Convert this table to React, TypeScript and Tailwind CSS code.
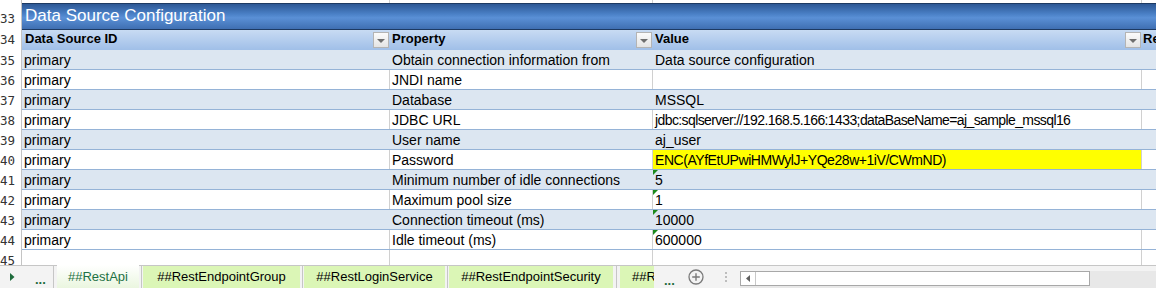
import React from "react";

type Row = { n: number; prop: string; value: string; yellow?: boolean; flag?: boolean; tight?: string };

const rows: Row[] = [
  { n: 35, prop: "Obtain connection information from", value: "Data source configuration" },
  { n: 36, prop: "JNDI name", value: "" },
  { n: 37, prop: "Database", value: "MSSQL" },
  {
    n: 38,
    prop: "JDBC URL",
    value: "jdbc:sqlserver://192.168.5.166:1433;dataBaseName=aj_sample_mssql16",
    tight: "tracking-[-0.6px]",
  },
  { n: 39, prop: "User name", value: "aj_user" },
  { n: 40, prop: "Password", value: "ENC(AYfEtUPwiHMWylJ+YQe28w+1iV/CWmND)", yellow: true, tight: "tracking-[-0.45px]" },
  { n: 41, prop: "Minimum number of idle connections", value: "5", flag: true },
  { n: 42, prop: "Maximum pool size", value: "1", flag: true },
  { n: 43, prop: "Connection timeout (ms)", value: "10000", flag: true },
  { n: 44, prop: "Idle timeout (ms)", value: "600000", flag: true },
];

const FilterButton = () => (
  <div className="absolute right-0 top-[2px] w-[16px] h-[16px] border border-[#b4b4b4] bg-[linear-gradient(#fbfbfb,#e4e4e4)] flex items-center justify-center">
    <div className="mt-[1px] w-0 h-0 border-l-[4px] border-r-[4px] border-t-[4px] border-l-transparent border-r-transparent border-t-[#6e6e6e]" />
  </div>
);

const RowNum = ({ n, h, pb }: { n: number; h: string; pb: string }) => (
  <div
    className={`w-[22px] shrink-0 ${h} ${pb} border-r border-[#c4c4c4] bg-white flex items-end justify-end pr-[6px] text-[12.5px] leading-[14px] text-[#333] font-['DejaVu_Sans_Mono',monospace]`}
  >
    {n}
  </div>
);

const Tab = ({ label, w }: { label: string; w: string }) => (
  <div className={`${w} shrink-0 bg-[#dbf6b6] flex items-center justify-center text-[13px] text-black`}>{label}</div>
);

const TabGap = ({ w }: { w: string }) => (
  <div className={`${w} shrink-0 flex justify-center`}>
    <div className="w-px h-full bg-[#c6c6c6]" />
  </div>
);

export default function App() {
  return (
    <div className="w-[1156px] h-[288px] overflow-hidden bg-white font-['Liberation_Sans',Arial,sans-serif] flex flex-col">
      {/* sheet */}
      <div className="h-[265px] overflow-hidden flex flex-col">
        {/* row 32, mostly hidden */}
        <div className="flex h-[3px] shrink-0">
          <div className="w-[22px] border-r border-[#c4c4c4]" />
          <div className="w-[368px] border-r border-[#d0d0d0]" />
          <div className="w-[263px] border-r border-[#d0d0d0]" />
          <div className="w-[489px] border-r border-[#d0d0d0]" />
          <div className="flex-1" />
        </div>

        {/* title row 33 */}
        <div className="flex h-[27px] shrink-0">
          <RowNum n={33} h="h-[27px]" pb="pb-[4px]" />
          <div className="flex-1 border-t border-b border-[#1d3a63] bg-[linear-gradient(to_bottom,#2d5895_0%,#4a80c6_40%,#5a90d6_55%,#3f6fb2_100%)] pl-[3px] text-[17px] leading-[24px] text-white">
            Data Source Configuration
          </div>
        </div>

        {/* header row 34 */}
        <div className="flex h-[20px] shrink-0">
          <RowNum n={34} h="h-[20px]" pb="pb-[3px]" />
          <div className="flex flex-1 bg-[linear-gradient(to_bottom,#c8dbf3,#a0bfe8)] text-[13px] leading-[18px] font-bold text-black">
            <div className="relative w-[368px] border-r border-transparent pl-[3px]">
              Data Source ID
              <FilterButton />
            </div>
            <div className="relative w-[263px] border-r border-transparent pl-[2px]">
              Property
              <FilterButton />
            </div>
            <div className="relative w-[489px] border-r border-transparent pl-[2px]">
              Value
              <FilterButton />
            </div>
            <div className="flex-1 pl-[1px] overflow-hidden whitespace-nowrap">Re</div>
          </div>
        </div>

        {/* data rows */}
        {rows.map((r) => {
          const band = r.n % 2 === 1;
          const grid = band ? "border-transparent" : "border-[#d0d0d0]";
          return (
            <div key={r.n} className="flex h-[20px] shrink-0">
              <RowNum n={r.n} h="h-[20px]" pb="pb-[2px]" />
              <div
                className={`flex flex-1 border-b border-[#95b3d7] text-[14px] leading-[20px] text-black whitespace-nowrap ${
                  band ? "bg-[#dce6f1]" : "bg-white"
                }`}
              >
                <div className={`w-[368px] border-r ${grid} pl-[2px]`}>primary</div>
                <div className={`w-[263px] border-r ${grid} pl-[2px]`}>{r.prop}</div>
                <div
                  className={`relative w-[489px] border-r ${grid} pl-[2px] overflow-hidden ${r.tight ?? ""} ${
                    r.yellow ? "bg-[#ffff00]" : ""
                  }`}
                >
                  {r.flag && (
                    <div className="absolute left-0 top-0 w-0 h-0 border-t-[5px] border-r-[5px] border-t-[#1c8a1c] border-r-transparent" />
                  )}
                  {r.value}
                </div>
                <div className="flex-1" />
              </div>
            </div>
          );
        })}

        {/* row 45 */}
        <div className="flex h-[20px] shrink-0">
          <RowNum n={45} h="h-[20px]" pb="pb-[2px]" />
          <div className="w-[368px] border-r border-[#d0d0d0]" />
          <div className="w-[263px] border-r border-[#d0d0d0]" />
          <div className="w-[489px] border-r border-[#d0d0d0]" />
          <div className="flex-1" />
        </div>
      </div>

      {/* sheet tabs */}
      <div className="flex h-[23px] shrink-0 border-t border-[#c6c6c6] bg-[#f3f3f3]">
        <div className="w-[54px] shrink-0 border-r border-[#c6c6c6] flex items-center pl-[10px]">
          <svg width="5" height="8" viewBox="0 0 5 8">
            <path d="M0 0 L4.5 4 L0 8 Z" fill="#1e6b3c" />
          </svg>
          <span className="ml-[20px] text-[13px] font-bold leading-none text-[#1e6b3c] mt-[4px]">...</span>
        </div>
        <div className="w-[3px] shrink-0" />
        <div className="w-[82px] shrink-0 -mt-px h-[23px] bg-[linear-gradient(to_bottom,#ffffff,#eaf6df)] flex items-center justify-center text-[13px] text-[#1e7145]">
          ##RestApi
        </div>
        <TabGap w="w-[4px]" />
        <Tab label="##RestEndpointGroup" w="w-[157px]" />
        <TabGap w="w-[4px]" />
        <Tab label="##RestLoginService" w="w-[141px]" />
        <TabGap w="w-[4px]" />
        <Tab label="##RestEndpointSecurity" w="w-[164px]" />
        <TabGap w="w-[7px]" />
        <div className="w-[34px] shrink-0 bg-[#dbf6b6] overflow-hidden flex items-center pl-[12px] text-[13px] whitespace-nowrap">
          ##R
        </div>
        <div className="ml-[10px] w-[10px] shrink-0 flex items-center">
          <span className="text-[13px] font-bold leading-none text-[#1e6b3c] mt-[6px]">...</span>
        </div>
        <div className="ml-[14px] shrink-0 flex items-center">
          <svg width="16" height="16" viewBox="0 0 16 16">
            <circle cx="8" cy="8" r="7" fill="none" stroke="#7a7a7a" strokeWidth="1.3" />
            <path d="M8 4.2 V11.8 M4.2 8 H11.8" stroke="#7a7a7a" strokeWidth="1.4" />
          </svg>
        </div>
        <div className="ml-[20px] w-[3px] shrink-0 flex flex-col items-center justify-center gap-[2px]">
          <div className="w-[2px] h-[2px] bg-[#bdbdbd]" />
          <div className="w-[2px] h-[2px] bg-[#bdbdbd]" />
          <div className="w-[2px] h-[2px] bg-[#bdbdbd]" />
        </div>
        <div className="ml-[13px] flex-1 mt-[5px] bg-[#e8e8e8] flex items-start">
          <div className="w-[350px] h-[15px] border border-[#a8a8a8] bg-white flex">
            <div className="w-[15px] h-full border-r border-[#c8c8c8] flex items-center justify-center">
              <svg width="4" height="7" viewBox="0 0 4 7">
                <path d="M4 0 L0 3.5 L4 7 Z" fill="#606060" />
              </svg>
            </div>
          </div>
        </div>
      </div>
    </div>
  );
}
